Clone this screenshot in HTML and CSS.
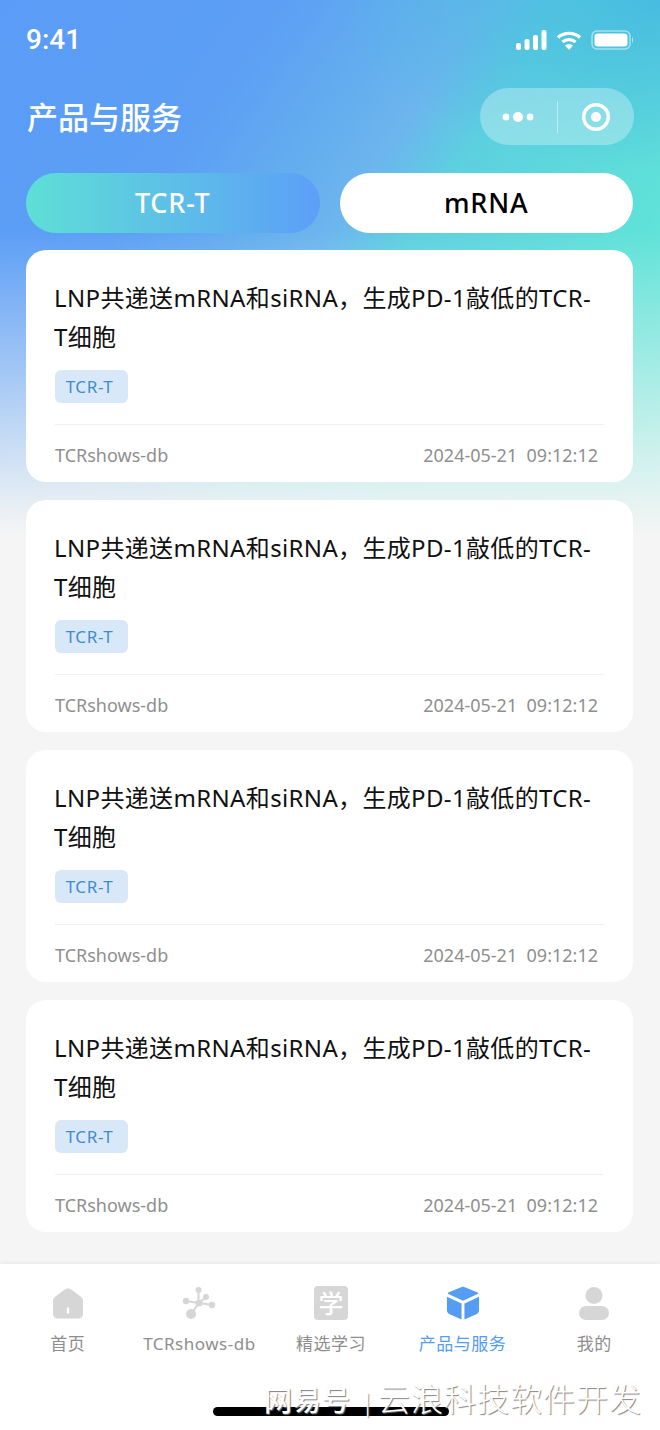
FILE: index.html
```html
<!DOCTYPE html>
<html lang="zh-CN">
  <head>
    <meta charset="UTF-8" />
    <meta name="viewport" content="width=device-width, initial-scale=1.0" />
    <title>产品与服务</title>
    <link rel="stylesheet" href="styles.css">
  </head>
  <body>
    <div class="page">
      <div class="status-bar">
        <span class="time">9:41</span>
        <div class="status-icons">
          <svg width="31" height="20" viewBox="0 0 31 20" fill="#fff">
            <rect x="0" y="13" width="5" height="7" rx="2" />
            <rect x="8.500" y="9" width="5" height="11" rx="2" />
            <rect x="17" y="5" width="5" height="15" rx="2" />
            <rect x="25.500" y="0" width="5" height="20" rx="2" />
          </svg>
          <svg width="26" height="20" viewBox="0 0 26 20" fill="none" stroke="#fff" stroke-width="3.400">
            <path d="M2 7.500C8 2 18 2 24 7.500" />
            <path d="M6.500 12C10 8.800 16 8.800 19.500 12" />
            <path d="M13 20l-4-4.600c2.200-1.700 5.800-1.700 8 0z" fill="#fff" stroke="none" />
          </svg>
          <svg width="43" height="20" viewBox="0 0 43 20" fill="none">
            <rect x="1" y="1" width="38" height="18" rx="5" stroke="#fff" stroke-opacity="0.5" stroke-width="1.500" />
            <rect x="3.500" y="3.500" width="33" height="13" rx="3" fill="#fff" />
            <path d="M41 7c1.500 0.500 1.500 5.500 0 6z" fill="#fff" fill-opacity="0.5" />
          </svg>
        </div>
      </div>

      <div class="nav-bar">
        <h1>产品与服务</h1>
        <div class="capsule">
          <div class="capsule-side">
            <svg width="34" height="14" viewBox="0 0 34 14" fill="#fff">
              <circle cx="5" cy="7" r="3.400" />
              <circle cx="17" cy="7" r="5" />
              <circle cx="29" cy="7" r="3.400" />
            </svg>
          </div>
          <span class="capsule-line"></span>
          <div class="capsule-side">
            <svg width="30" height="30" viewBox="0 0 30 30">
              <circle cx="15" cy="15" r="12.300" fill="none" stroke="#fff" stroke-width="3.400" />
              <circle cx="15" cy="15" r="5" fill="#fff" />
            </svg>
          </div>
        </div>
      </div>

      <div class="tabs">
        <div class="tab tab-active">TCR-T</div>
        <div class="tab">mRNA</div>
      </div>

      <div class="card-list">
        <div class="card">
          <div class="card-title">LNP共递送mRNA和siRNA，生成PD-1敲低的TCR-T细胞</div>
          <span class="card-tag">TCR-T</span>
          <div class="card-foot">
            <span>TCRshows-db</span>
            <span class="card-date">2024-05-21&nbsp; 09:12:12</span>
          </div>
        </div>
        <div class="card">
          <div class="card-title">LNP共递送mRNA和siRNA，生成PD-1敲低的TCR-T细胞</div>
          <span class="card-tag">TCR-T</span>
          <div class="card-foot">
            <span>TCRshows-db</span>
            <span class="card-date">2024-05-21&nbsp; 09:12:12</span>
          </div>
        </div>
        <div class="card">
          <div class="card-title">LNP共递送mRNA和siRNA，生成PD-1敲低的TCR-T细胞</div>
          <span class="card-tag">TCR-T</span>
          <div class="card-foot">
            <span>TCRshows-db</span>
            <span class="card-date">2024-05-21&nbsp; 09:12:12</span>
          </div>
        </div>
        <div class="card">
          <div class="card-title">LNP共递送mRNA和siRNA，生成PD-1敲低的TCR-T细胞</div>
          <span class="card-tag">TCR-T</span>
          <div class="card-foot">
            <span>TCRshows-db</span>
            <span class="card-date">2024-05-21&nbsp; 09:12:12</span>
          </div>
        </div>
      </div>

      <div class="tab-bar">
        <div class="tab-item">
          <svg width="34" height="34" viewBox="0 0 34 34">
            <path d="M17 2.500c1.500 0 2.800 0.600 4 1.500l8.500 6.500c1.500 1.200 2.500 2.700 2.500 4.500v12.500c0 3-2 5-5 5h-20c-3 0-5-2-5-5v-12.500c0-1.800 1-3.300 2.500-4.500l8.500-6.500c1.200-0.900 2.500-1.500 4-1.500z" fill="#d6d6d6" />
            <rect x="15.800" y="21.500" width="2.400" height="6" fill="#fff" />
          </svg>
          <span>首页</span>
        </div>
        <div class="tab-item">
          <svg width="34" height="34" viewBox="0 0 34 34" fill="#d6d6d6" stroke="#d6d6d6">
            <path d="M16.500 4v13M4 15l13 2 13 2M24 11l-7 6-8 11" stroke-width="2" fill="none" />
            <circle cx="16.500" cy="4" r="3" stroke="none" />
            <circle cx="4" cy="15" r="3.200" stroke="none" />
            <circle cx="17" cy="17" r="3.500" stroke="none" />
            <circle cx="24" cy="11" r="3" stroke="none" />
            <circle cx="30" cy="19" r="3.200" stroke="none" />
            <circle cx="9" cy="28" r="5" stroke="none" />
          </svg>
          <span>TCRshows-db</span>
        </div>
        <div class="tab-item">
          <div class="study-icon">学</div>
          <span>精选学习</span>
        </div>
        <div class="tab-item tab-item-active">
          <svg width="36" height="36" viewBox="0 0 36 36" fill="#559df2">
            <path d="M18 0.500l15.500 6.500c0.800 0.400 0.800 1.200 0 1.600L18 15.500 2.500 8.600c-0.800-0.400-0.800-1.200 0-1.600z" />
            <path d="M1 11.500l15.500 7v17L4 30c-2-1-3-2.500-3-4.500z" />
            <path d="M35 11.500l-15.500 7v17L32 30c2-1 3-2.500 3-4.500z" />
          </svg>
          <span>产品与服务</span>
        </div>
        <div class="tab-item">
          <svg width="34" height="34" viewBox="0 0 34 34" fill="#d6d6d6">
            <circle cx="17" cy="9.500" r="8.500" />
            <rect x="2" y="20" width="30" height="14" rx="7" />
          </svg>
          <span>我的</span>
        </div>
      </div>

      <div class="home-bar"></div>
      <div class="watermark">
        <span class="watermark-site">网易号</span>
        <span class="watermark-line">|</span>
        <span class="watermark-name">云浪科技软件开发</span>
      </div>
    </div>
  </body>
</html>
```

FILE: styles.css
```css
* {
  box-sizing: border-box;
}

html,
body {
  margin: 0;
  padding: 0;
}

body {
  font-family: "Noto Sans", "Noto Sans CJK SC", sans-serif;
  background-color: #f5f5f5;
  color: #111;
}

.page {
  position: relative;
  width: 660px;
  height: 1430px;
  overflow: hidden;
  background-color: #f5f5f5;
  background-image:
    linear-gradient(180deg, rgba(245, 245, 245, 0) 230px, #f5f5f5 535px),
    radial-gradient(320px 170px at 100% 0, #48bce0 0%, rgba(72, 188, 224, 0) 100%),
    linear-gradient(125deg, #5a9cf7 0%, #5c9ff5 27%, #64aeee 40%, #6cb5ee 47%, #5cd0df 55%, #5fe2d8 78%, #62e8d6 100%);
  background-size: 660px 550px;
  background-repeat: no-repeat;
}

.status-bar {
  height: 88px;
  padding: 23px 26px 0 26px;
  display: flex;
  justify-content: space-between;
  align-items: flex-start;
}

.time {
  font-family: Roboto, sans-serif;
  font-size: 28px;
  font-weight: 500;
  line-height: 34px;
  color: #fff;
}

.status-icons {
  display: flex;
  align-items: center;
  gap: 9px;
  padding-top: 7px;
}

.nav-bar {
  height: 57px;
  padding: 0 26px 0 27px;
  display: flex;
  justify-content: space-between;
  align-items: center;
}

h1 {
  margin: 0;
  font-size: 31px;
  font-weight: 500;
  line-height: 60px;
  color: #fff;
}

.capsule {
  width: 154px;
  height: 57px;
  border-radius: 29px;
  background-color: rgba(255, 255, 255, 0.3);
  display: flex;
  align-items: center;
}

.capsule-side {
  flex: 1;
  display: flex;
  justify-content: center;
}

.capsule-line {
  width: 1px;
  height: 32px;
  background-color: rgba(255, 255, 255, 0.45);
}

.tabs {
  margin-top: 28px;
  padding: 0 27px 0 26px;
  display: flex;
  gap: 20px;
}

.tab {
  flex: 1;
  height: 60px;
  border-radius: 30px;
  background-color: #fff;
  font-size: 27px;
  font-weight: 500;
  letter-spacing: 0.8px;
  line-height: 60px;
  text-align: center;
  color: #000;
}

.tab-active {
  color: #fff;
  background-image: linear-gradient(90deg, #5edfd6, #5c9ff8);
}

.card-list {
  margin-top: 17px;
  padding: 0 27px 0 26px;
  display: flex;
  flex-direction: column;
  gap: 18px;
}

.card {
  height: 232px;
  padding: 28px 29px 0 29px;
  background-color: #fff;
  border-radius: 20px;
}

.card-title {
  font-size: 24px;
  letter-spacing: 0.35px;
  line-height: 39px;
  height: 78px;
  margin: 0 3px 0 -1px;
  color: #111;
}

.card-tag {
  display: block;
  width: 73px;
  height: 33px;
  margin-top: 14px;
  padding-right: 4px;
  border-radius: 6px;
  background-color: #d8e8f9;
  color: #3f8ccd;
  font-size: 17px;
  letter-spacing: 0.6px;
  line-height: 33px;
  text-align: center;
}

.card-foot {
  margin-top: 21px;
  padding: 18px 6px 0 0;
  border-top: 1px solid #f0f0f0;
  display: flex;
  justify-content: space-between;
  font-size: 18px;
  line-height: 24px;
  color: #8f8f8f;
}

.tab-bar {
  position: absolute;
  left: 0;
  right: 0;
  bottom: 0;
  height: 166px;
  padding-top: 22px;
  background-color: #fff;
  box-shadow: 0 -1px 4px rgba(0, 0, 0, 0.06);
  display: flex;
}

.tab-item {
  flex: 1;
  display: flex;
  flex-direction: column;
  align-items: center;
  font-size: 17px;
  letter-spacing: 0.5px;
  line-height: 22px;
  color: #8e8e8e;
  white-space: nowrap;
}

.tab-item:first-child {
  padding-left: 2px;
}

.tab-item svg,
.study-icon {
  height: 34px;
  margin-bottom: 13px;
}

.tab-item-active {
  color: #559df2;
}

.study-icon {
  width: 34px;
  border-radius: 4px;
  background-color: #d6d6d6;
  color: #fff;
  font-size: 25px;
  font-weight: 500;
  letter-spacing: 0;
  line-height: 34px;
  text-align: center;
}

.home-bar {
  position: absolute;
  left: 213px;
  top: 1407px;
  width: 236px;
  height: 9px;
  border-radius: 5px;
  background-color: #000;
}

.watermark {
  position: absolute;
  left: 264px;
  top: 1377px;
  display: flex;
  align-items: baseline;
  line-height: 44px;
  color: #fff;
  white-space: nowrap;
  text-shadow: 1px 1px 1px #808080;
}

.watermark-site {
  font-size: 28px;
  font-weight: 500;
  letter-spacing: 1px;
}

.watermark-line {
  margin-left: 10px;
  font-size: 24px;
  font-weight: 300;
}

.watermark-name {
  margin-left: 4px;
  font-size: 32px;
  font-weight: 300;
  letter-spacing: 1px;
}
```
